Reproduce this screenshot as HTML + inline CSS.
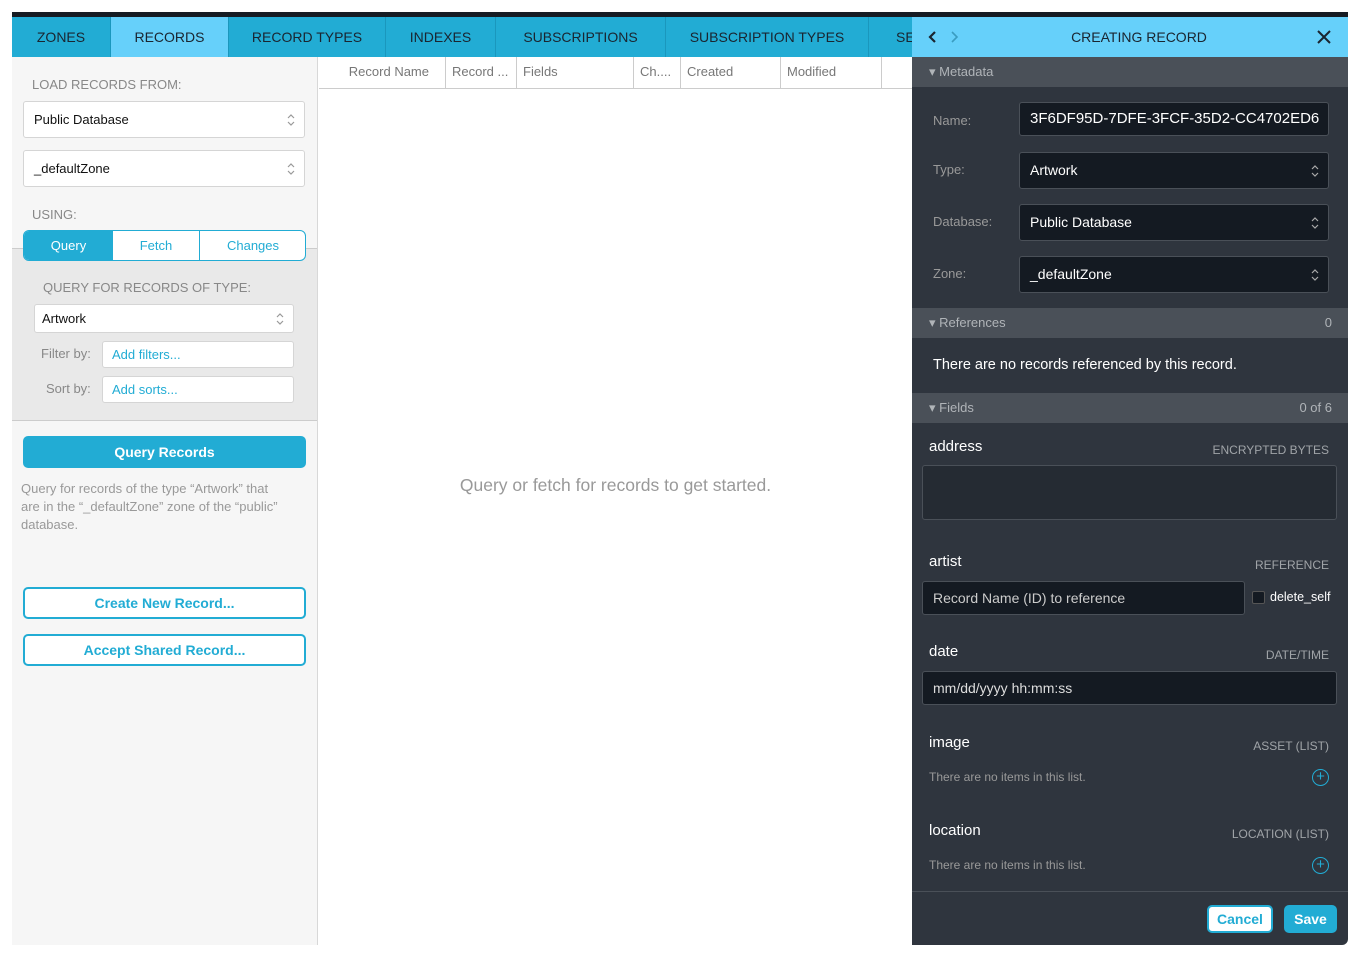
<!DOCTYPE html><html><head><meta charset="utf-8"><style>
*{box-sizing:border-box;margin:0;padding:0}
body{width:1360px;height:957px;background:#fff;font-family:"Liberation Sans",sans-serif;position:relative;overflow:hidden}
.a{position:absolute}
.tabs{left:12px;top:12px;width:900px;height:45px;background:#22acd4;border-top:5px solid #161b22;overflow:hidden;white-space:nowrap}
.tab{position:absolute;top:0;height:40px;line-height:40px;font-size:14px;color:#1a2530;text-align:center;border-right:1px solid #1a97bd}
.left{left:12px;top:57px;width:306px;height:888px;background:#f6f6f6;border-right:1px solid #d8d8d8}
.lbl{font-size:13px;color:#888}
.sel{background:#fff;border:1px solid #d5d5d5;border-radius:3px;font-size:13px;color:#111;padding-left:10px}
.arr{position:absolute;right:9px;top:50%;transform:translateY(-50%);width:8px;height:14px}
.blue{color:#22acd4}
.btn2{border:2px solid #22acd4;border-radius:5px;background:#fff;color:#22acd4;font-weight:bold;font-size:14px;text-align:center}
.th{position:absolute;top:0;height:32px;line-height:30px;font-size:13px;color:#777;border-right:1px solid #ccc;padding-left:6px}
.right{left:912px;top:12px;width:436px;height:933px;background:#2f353e;border-bottom-right-radius:6px;overflow:hidden}
.sec{position:absolute;left:0;width:436px;height:30px;background:#4a5058;color:#b0b4b8;font-size:13px;line-height:30px;padding-left:17px}
.fl{position:absolute;left:21px;font-size:13px;color:#999}
.inp{position:absolute;background:#141a22;border:1px solid #4a5058;border-radius:3px;color:#fff;font-size:14px;padding-left:10px}
.fn{position:absolute;left:17px;font-size:15px;color:#fff}
.ft{position:absolute;right:19px;font-size:12px;color:#a0a4a8}
.plus{position:absolute;right:19px;width:17px;height:17px;border:1.5px solid #22acd4;border-radius:50%;color:#22acd4;font-size:15px;line-height:13px;text-align:center}
</style></head><body>
<svg width="0" height="0" style="position:absolute"><defs><symbol id="ud" viewBox="0 0 8 14"><path d="M1 5 L4 2 L7 5 M1 9 L4 12 L7 9" fill="none" stroke="currentColor" stroke-width="1.2"/></symbol></defs></svg>
<div class="a tabs">
<div class="tab" style="left:0;width:99px">ZONES</div>
<div class="tab" style="left:99px;width:118px;background:#66d0fa">RECORDS</div>
<div class="tab" style="left:217px;width:157px">RECORD TYPES</div>
<div class="tab" style="left:374px;width:110px">INDEXES</div>
<div class="tab" style="left:484px;width:170px">SUBSCRIPTIONS</div>
<div class="tab" style="left:654px;width:203px">SUBSCRIPTION TYPES</div>
<div class="tab" style="left:857px;width:60px;text-align:left;padding-left:27px">SE</div>
</div>
<div class="a left">
<div class="a lbl" style="left:20px;top:20px">LOAD RECORDS FROM:</div>
<div class="a sel" style="left:11px;top:44px;width:282px;height:37px;line-height:36px">Public Database<svg class="arr" style="color:#999"><use href="#ud"/></svg></div>
<div class="a sel" style="left:11px;top:93px;width:282px;height:37px;line-height:36px">_defaultZone<svg class="arr" style="color:#999"><use href="#ud"/></svg></div>
<div class="a lbl" style="left:20px;top:150px">USING:</div>
<div class="a" style="left:0;top:191px;width:305px;height:173px;background:#e9e9e9;border-top:1px solid #ccc;border-bottom:1px solid #ccc"></div>
<div class="a" style="left:11px;top:173px;width:283px;height:31px;border:1px solid #22acd4;border-radius:6px;background:#fff;overflow:hidden;font-size:13px;line-height:29px;text-align:center">
<div class="a" style="left:0;top:0;width:89px;height:29px;background:#22acd4;color:#fff">Query</div>
<div class="a blue" style="left:89px;top:0;width:87px;height:29px;border-right:1px solid #22acd4">Fetch</div>
<div class="a blue" style="left:176px;top:0;width:106px;height:29px">Changes</div></div>
<div class="a lbl" style="left:31px;top:223px">QUERY FOR RECORDS OF TYPE:</div>
<div class="a sel" style="left:22px;top:247px;width:260px;height:29px;line-height:28px;padding-left:7px">Artwork<svg class="arr" style="color:#999"><use href="#ud"/></svg></div>
<div class="a lbl" style="left:29px;top:289px">Filter by:</div>
<div class="a sel blue" style="left:90px;top:284px;width:192px;height:27px;line-height:26px;padding-left:9px;color:#22acd4">Add filters...</div>
<div class="a lbl" style="left:34px;top:324px">Sort by:</div>
<div class="a sel blue" style="left:90px;top:319px;width:192px;height:27px;line-height:26px;padding-left:9px;color:#22acd4">Add sorts...</div>
<div class="a" style="left:11px;top:379px;width:283px;height:32px;background:#22acd4;border-radius:5px;color:#fff;font-weight:bold;font-size:14px;text-align:center;line-height:32px">Query Records</div>
<div class="a" style="left:9px;top:423px;width:300px;font-size:13px;color:#999;line-height:18px;white-space:nowrap">Query for records of the type “Artwork” that<br>are in the “_defaultZone” zone of the “public”<br>database.</div>
<div class="a btn2" style="left:11px;top:530px;width:283px;height:32px;line-height:28px">Create New Record...</div>
<div class="a btn2" style="left:11px;top:577px;width:283px;height:32px;line-height:28px">Accept Shared Record...</div>
</div>
<div class="a" style="left:319px;top:57px;width:593px;height:32px;border-bottom:1px solid #ccc;background:#fff">
<div class="th" style="left:0;width:127px;text-align:right;padding-right:16px">Record Name</div>
<div class="th" style="left:127px;width:71px">Record ...</div>
<div class="th" style="left:198px;width:117px">Fields</div>
<div class="th" style="left:315px;width:47px">Ch....</div>
<div class="th" style="left:362px;width:100px">Created</div>
<div class="th" style="left:462px;width:101px">Modified</div>
</div>
<div class="a" style="left:319px;top:475px;width:593px;text-align:center;font-size:17.5px;color:#999">Query or fetch for records to get started.</div>
<div class="a right">
<div class="a" style="left:0;top:0;width:436px;height:5px;background:#161b22"></div>
<div class="a" style="left:0;top:5px;width:436px;height:40px;background:#66d0fa;text-align:center;line-height:40px;font-size:14px;color:#1a2530"><span style="margin-left:18px">CREATING RECORD</span>
<svg class="a" style="left:16px;top:13px" width="10" height="14"><path d="M7 2 L2 7 L7 12" fill="none" stroke="#1a2530" stroke-width="2.2"/></svg>
<svg class="a" style="left:37px;top:13px" width="10" height="14"><path d="M3 2 L8 7 L3 12" fill="none" stroke="#3a9cc0" stroke-width="1.6"/></svg>
<svg class="a" style="right:17px;top:13px" width="14" height="14"><path d="M1 1 L13 13 M13 1 L1 13" stroke="#1a2530" stroke-width="2"/></svg></div>
<div class="sec" style="top:45px">▾ Metadata</div>
<div class="fl" style="top:101px">Name:</div><div class="inp" style="left:107px;top:90px;width:310px;height:34px;line-height:32px;font-size:15px">3F6DF95D-7DFE-3FCF-35D2-CC4702ED6</div>
<div class="fl" style="top:150px">Type:</div><div class="inp" style="left:107px;top:140px;width:310px;height:37px;line-height:35px">Artwork<svg class="arr" style="color:#aaa"><use href="#ud"/></svg></div>
<div class="fl" style="top:202px">Database:</div><div class="inp" style="left:107px;top:192px;width:310px;height:37px;line-height:35px">Public Database<svg class="arr" style="color:#aaa"><use href="#ud"/></svg></div>
<div class="fl" style="top:254px">Zone:</div><div class="inp" style="left:107px;top:244px;width:310px;height:37px;line-height:35px">_defaultZone<svg class="arr" style="color:#aaa"><use href="#ud"/></svg></div>
<div class="sec" style="top:296px">▾ References<span style="position:absolute;right:16px">0</span></div>
<div class="a" style="left:21px;top:345px;font-size:14.5px;color:#fff">There are no records referenced by this record.</div>
<div class="sec" style="top:381px">▾ Fields<span style="position:absolute;right:16px">0 of 6</span></div>
<div class="fn" style="top:426px">address</div><div class="ft" style="top:431px">ENCRYPTED BYTES</div>
<div class="inp" style="left:10px;top:453px;width:415px;height:55px;background:#252b33"></div>
<div class="fn" style="top:541px">artist</div><div class="ft" style="top:546px">REFERENCE</div>
<div class="inp" style="left:10px;top:569px;width:323px;height:34px;line-height:32px;color:#ccc">Record Name (ID) to reference</div>
<div class="a" style="left:340px;top:579px;width:13px;height:13px;background:#141a22;border:1px solid #555;border-radius:2px"></div>
<div class="a" style="left:358px;top:578px;font-size:12.5px;color:#fff">delete_self</div>
<div class="fn" style="top:631px">date</div><div class="ft" style="top:636px">DATE/TIME</div>
<div class="inp" style="left:10px;top:659px;width:415px;height:34px;line-height:32px;color:#ddd">mm/dd/yyyy hh:mm:ss</div>
<div class="fn" style="top:722px">image</div><div class="ft" style="top:727px">ASSET (LIST)</div>
<div class="a" style="left:17px;top:758px;font-size:12px;color:#999">There are no items in this list.</div><div class="plus" style="top:757px">+</div>
<div class="fn" style="top:810px">location</div><div class="ft" style="top:815px">LOCATION (LIST)</div>
<div class="a" style="left:17px;top:846px;font-size:12px;color:#999">There are no items in this list.</div><div class="plus" style="top:845px">+</div>
<div class="a" style="left:0;top:879px;width:436px;height:1px;background:#4a5058"></div>
<div class="a" style="left:295px;top:893px;width:66px;height:28px;background:#fff;border:2px solid #22acd4;border-radius:5px;color:#22acd4;font-size:14px;font-weight:bold;text-align:center;line-height:24px">Cancel</div>
<div class="a" style="left:372px;top:893px;width:53px;height:28px;background:#22acd4;border-radius:5px;color:#fff;font-size:14px;font-weight:bold;text-align:center;line-height:28px">Save</div>
</div>
</body></html>
